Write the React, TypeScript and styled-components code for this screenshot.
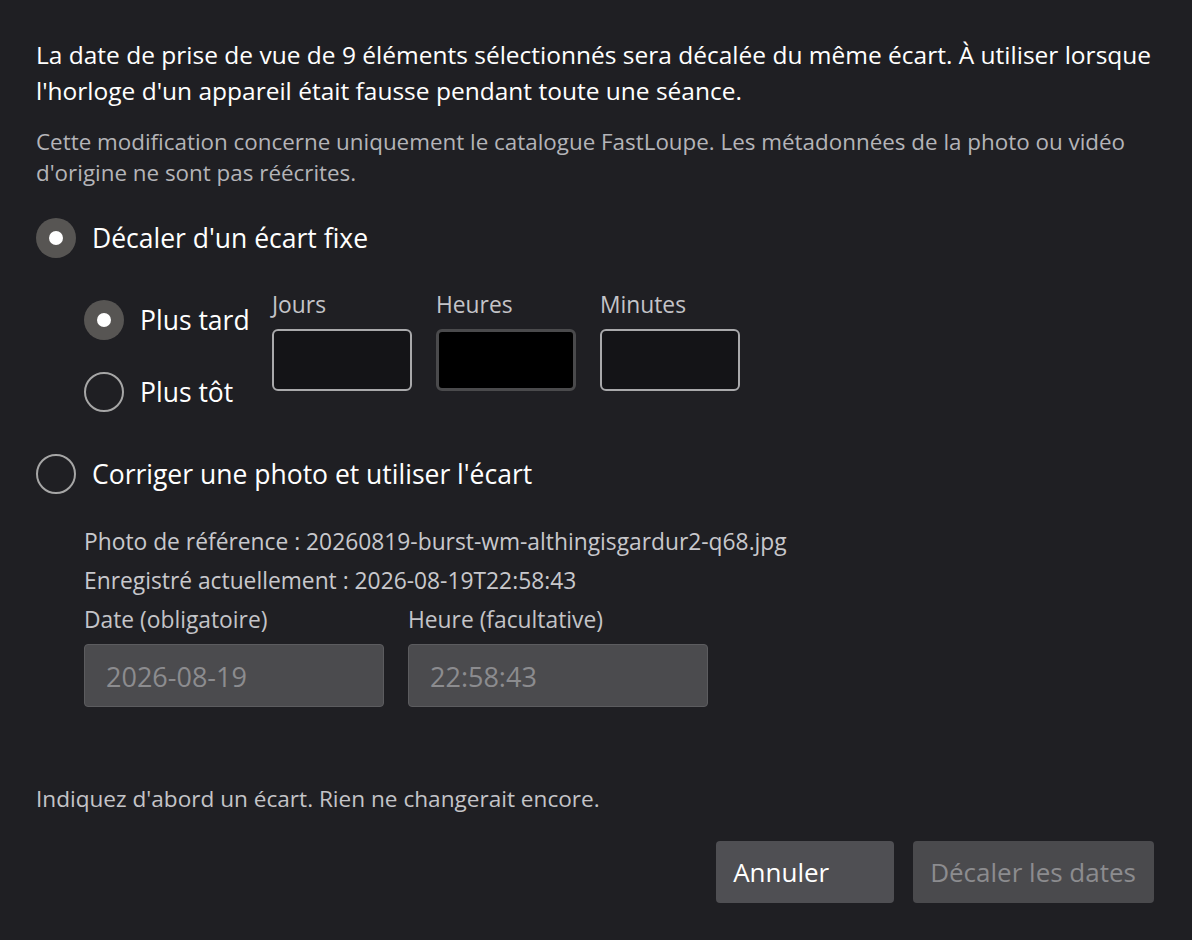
import React, { useState } from "react";
import styled, { createGlobalStyle } from "styled-components";

const GlobalStyle = createGlobalStyle`
  html, body {
    margin: 0;
    padding: 0;
    background: #1f1f23;
  }

  body {
    font-family: "Open Sans", "Noto Sans", sans-serif;
    color: #ffffff;
  }
`;

const Dialog = styled.div`
  width: 1192px;
  min-height: 940px;
  box-sizing: border-box;
  padding: 37px 36px 0 36px;
  background: #1f1f23;
  display: flex;
  flex-direction: column;
`;

const Lead = styled.p`
  margin: 0;
  font-size: 24.5px;
  line-height: 36px;
  color: #ffffff;
`;

const Note = styled.p`
  margin: 17px 0 0;
  font-size: 22.4px;
  line-height: 31px;
  color: #b4b4b8;
`;

const Choice = styled.label<{ $top: number }>`
  display: flex;
  align-items: center;
  gap: 16px;
  margin-top: ${({ $top }) => $top}px;
  height: 40px;
  font-size: 26.5px;
  color: #ffffff;
  white-space: nowrap;
  cursor: pointer;
`;

const Dot = styled.span<{ $on: boolean }>`
  flex: 0 0 auto;
  width: 40px;
  height: 40px;
  box-sizing: border-box;
  border-radius: 50%;
  display: flex;
  align-items: center;
  justify-content: center;
  background: ${({ $on }) => ($on ? "#575553" : "transparent")};
  border: ${({ $on }) => ($on ? "none" : "2px solid #a6a6a6")};

  &::after {
    content: "";
    width: 14px;
    height: 14px;
    border-radius: 50%;
    background: #ffffff;
    display: ${({ $on }) => ($on ? "block" : "none")};
  }
`;

const OffsetBlock = styled.div`
  display: flex;
  align-items: flex-start;
  gap: 24px;
  margin-top: 35px;
  padding-left: 48px;
`;

const Direction = styled.div`
  display: flex;
  flex-direction: column;
  gap: 32px;
  padding-top: 7px;
  width: 164px;
`;

const Fields = styled.div`
  display: flex;
  gap: 24px;
`;

const Field = styled.div`
  display: flex;
  flex-direction: column;
  gap: 12px;
`;

const FieldLabel = styled.span`
  font-size: 22.8px;
  line-height: 24px;
  color: #c4c4c8;
  white-space: nowrap;
`;

const NumberBox = styled.div<{ $focused?: boolean }>`
  width: 140px;
  height: 62px;
  box-sizing: border-box;
  border-radius: 6px;
  background: ${({ $focused }) => ($focused ? "#000000" : "#141417")};
  border: ${({ $focused }) => ($focused ? "3px solid #4a4a4c" : "2px solid #a9a9ab")};
`;

const RefBlock = styled.div`
  display: flex;
  flex-direction: column;
  gap: 15px;
  margin-top: 36px;
  padding-left: 48px;
`;

const InfoLine = styled.div`
  font-size: 22.8px;
  line-height: 24px;
  color: #c8c8cc;
`;

const DateRow = styled.div`
  display: flex;
  gap: 24px;
`;

const DateField = styled.div`
  display: flex;
  flex-direction: column;
  gap: 12px;
`;

const DisabledInput = styled.div`
  width: 300px;
  height: 63px;
  box-sizing: border-box;
  padding: 2px 21px 0;
  border-radius: 4px;
  background: #4b4b4e;
  border: 1px solid #5c5c5f;
  display: flex;
  align-items: center;
  font-size: 27px;
  color: #8c8c8f;
`;

const Status = styled.div`
  margin-top: 80px;
  font-size: 22.6px;
  line-height: 24px;
  color: #c4c4c8;
`;

const Actions = styled.div`
  display: flex;
  justify-content: flex-end;
  gap: 19px;
  margin: 30px 2px 0 0;
`;

const Button = styled.button<{ $disabled?: boolean }>`
  min-width: 178px;
  height: 62px;
  padding: 0 18px 0 17px;
  border: none;
  border-radius: 4px;
  text-align: left;
  font-family: inherit;
  font-size: 26px;
  white-space: nowrap;
  background: ${({ $disabled }) => ($disabled ? "#4a4a4d" : "#4f4f53")};
  color: ${({ $disabled }) => ($disabled ? "#8c8c8f" : "#ffffff")};
  cursor: ${({ $disabled }) => ($disabled ? "default" : "pointer")};
`;

type Mode = "fixed" | "photo";
type Dir = "later" | "earlier";

const App = () => {
  const [mode, setMode] = useState<Mode>("fixed");
  const [dir, setDir] = useState<Dir>("later");

  return (
    <>
      <GlobalStyle />
      <Dialog>
        <Lead>
          La date de prise de vue de 9 éléments sélectionnés sera décalée du même écart. À utiliser lorsque
          l'horloge d'un appareil était fausse pendant toute une séance.
        </Lead>
        <Note>
          Cette modification concerne uniquement le catalogue FastLoupe. Les métadonnées de la photo ou vidéo
          d'origine ne sont pas réécrites.
        </Note>

        <Choice $top={30} onClick={() => setMode("fixed")}>
          <Dot $on={mode === "fixed"} />
          Décaler d'un écart fixe
        </Choice>

        <OffsetBlock>
          <Direction>
            <Choice $top={0} onClick={() => setDir("later")}>
              <Dot $on={dir === "later"} />
              Plus tard
            </Choice>
            <Choice $top={0} onClick={() => setDir("earlier")}>
              <Dot $on={dir === "earlier"} />
              Plus tôt
            </Choice>
          </Direction>
          <Fields>
            <Field>
              <FieldLabel>Jours</FieldLabel>
              <NumberBox />
            </Field>
            <Field>
              <FieldLabel>Heures</FieldLabel>
              <NumberBox $focused />
            </Field>
            <Field>
              <FieldLabel>Minutes</FieldLabel>
              <NumberBox />
            </Field>
          </Fields>
        </OffsetBlock>

        <Choice $top={42} onClick={() => setMode("photo")}>
          <Dot $on={mode === "photo"} />
          Corriger une photo et utiliser l'écart
        </Choice>

        <RefBlock>
          <InfoLine>Photo de référence : 20260819-burst-wm-althingisgardur2-q68.jpg</InfoLine>
          <InfoLine>Enregistré actuellement : 2026-08-19T22:58:43</InfoLine>
          <DateRow>
            <DateField>
              <FieldLabel>Date (obligatoire)</FieldLabel>
              <DisabledInput>2026-08-19</DisabledInput>
            </DateField>
            <DateField>
              <FieldLabel>Heure (facultative)</FieldLabel>
              <DisabledInput>22:58:43</DisabledInput>
            </DateField>
          </DateRow>
        </RefBlock>

        <Status>Indiquez d'abord un écart. Rien ne changerait encore.</Status>

        <Actions>
          <Button>Annuler</Button>
          <Button $disabled>Décaler les dates</Button>
        </Actions>
      </Dialog>
    </>
  );
};

export default App;
